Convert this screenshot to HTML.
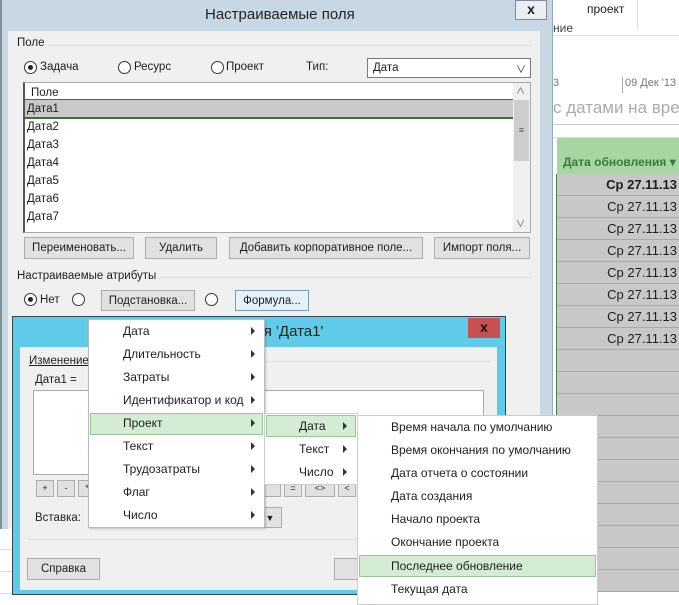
<!DOCTYPE html>
<html><head><meta charset="utf-8"><style>
*{box-sizing:border-box;margin:0;padding:0}
body{width:679px;height:597px;overflow:hidden;position:relative;background:#fff;font-family:"Liberation Sans","Noto Sans CJK SC",sans-serif;font-size:11.5px;color:#1e1e1e}
.a{position:absolute;white-space:nowrap}
.btn{position:absolute;background:#e1e1e1;border:1px solid #adadad;text-align:center;display:flex;align-items:center;justify-content:center}
.rad{position:absolute;width:13px;height:13px;border:1px solid #333;border-radius:50%;background:#fff}
.rad.on::after{content:"";position:absolute;left:3px;top:3px;width:5px;height:5px;border-radius:50%;background:#222}
.row{position:absolute;left:557px;width:122px;height:22px;background:#c8c8c8;border-bottom:1px solid #a8a8a8;text-align:right;padding-right:2px;line-height:21px;font-size:13px}
.mi{position:absolute;height:22px;line-height:22px;font-size:12px}
.arr{position:absolute;width:0;height:0;border-top:4px solid transparent;border-bottom:4px solid transparent;border-left:4px solid #333}
.sb{position:absolute;width:18px;height:17px;background:#e1e1e1;border:1px solid #adadad;text-align:center;font-size:9px;line-height:15px}
</style></head><body>
<div class="a" style="left:553px;top:0;width:126px;height:36px;border-bottom:1px solid #ddd"></div>
<div class="a" style="left:587px;top:2px;font-size:12px">проект</div>
<div class="a" style="left:637px;top:0;width:1px;height:30px;background:#ddd"></div>
<div class="a" style="left:553px;top:21px;font-size:12px;color:#444">ние</div>
<div class="a" style="left:622px;top:77px;font-size:11px;color:#777;border-left:1px solid #aaa;padding-left:2px;height:16px">09 Дек '13</div>
<div class="a" style="left:553px;top:77px;font-size:11px;color:#777">3</div>
<div class="a" style="left:553px;top:98px;font-size:17px;color:#aaa">с датами на врем</div>
<div class="a" style="left:553px;top:124px;width:126px;height:1px;background:#ccc"></div>
<div class="a" style="left:553px;top:137px;width:126px;height:1px;background:#ddd"></div>
<div class="a" style="left:557px;top:138px;width:122px;height:36px;background:#a6d6a2"></div>
<div class="a" style="left:563px;top:155px;font-size:12px;font-weight:bold;color:#3d7a3d">Дата обновления ▾</div>
<div class="a" style="left:556px;top:174px;width:2px;height:423px;background:#4a7a4a"></div>
<div class="row" style="top:174px;font-weight:bold">Ср 27.11.13</div>
<div class="row" style="top:196px">Ср 27.11.13</div>
<div class="row" style="top:218px">Ср 27.11.13</div>
<div class="row" style="top:240px">Ср 27.11.13</div>
<div class="row" style="top:262px">Ср 27.11.13</div>
<div class="row" style="top:284px">Ср 27.11.13</div>
<div class="row" style="top:306px">Ср 27.11.13</div>
<div class="row" style="top:328px">Ср 27.11.13</div>
<div class="row" style="top:350px"></div>
<div class="row" style="top:372px"></div>
<div class="row" style="top:394px"></div>
<div class="row" style="top:416px"></div>
<div class="row" style="top:438px"></div>
<div class="row" style="top:460px"></div>
<div class="row" style="top:482px"></div>
<div class="row" style="top:504px"></div>
<div class="row" style="top:526px"></div>
<div class="row" style="top:548px"></div>
<div class="row" style="top:570px"></div>
<div class="a" style="left:0;top:528px;width:12px;height:69px;background:repeating-linear-gradient(#fff 0 21px,#ddd 21px 22px)"></div>
<div class="a" style="left:0;top:0;width:553px;height:529px;background:#c7d8e4;border-right:1px solid #9ab"></div>
<div class="a" style="left:0;top:0;width:2px;height:529px;background:#7d8e9a"></div>
<div class="a" style="left:205px;top:6px;font-size:15px;color:#222">Настраиваемые поля</div>
<div class="a" style="left:515px;top:0;width:32px;height:20px;background:#e8eef2;border:1px solid #889;text-align:center;font-weight:bold;font-size:14px;line-height:17px">x</div>
<div class="a" style="left:8px;top:31px;width:532px;height:498px;background:#f0f0f0"></div>
<div class="a" style="left:17px;top:37px">Поле</div>
<div class="a" style="left:48px;top:45px;width:484px;height:1px;background:#ddd"></div>
<div class="rad on" style="left:24px;top:61px"></div><div class="a" style="left:40px;top:61px">Задача</div>
<div class="rad" style="left:118px;top:61px"></div><div class="a" style="left:134px;top:61px">Ресурс</div>
<div class="rad" style="left:211px;top:61px"></div><div class="a" style="left:226px;top:61px">Проект</div>
<div class="a" style="left:306px;top:61px">Тип:</div>
<div class="a" style="left:367px;top:58px;width:164px;height:20px;background:#fff;border:1px solid #7a7a7a;padding:3px 5px">Дата<span style="position:absolute;right:4px;top:2px;font-size:10px">&#8744;</span></div>
<div class="a" style="left:23px;top:82px;width:508px;height:151px;background:#fff;border:1px solid #aaa;border-left:2px solid #555"></div>
<div class="a" style="left:31px;top:87px">Поле</div>
<div class="a" style="left:25px;top:99px;width:488px;height:20px;background:#c9c9c9;border-top:1px solid #3f6e3f;border-bottom:2px solid #3f6e3f"></div>
<div class="a" style="left:27px;top:103px">Дата1</div>
<div class="a" style="left:27px;top:121px">Дата2</div>
<div class="a" style="left:27px;top:139px">Дата3</div>
<div class="a" style="left:27px;top:157px">Дата4</div>
<div class="a" style="left:27px;top:175px">Дата5</div>
<div class="a" style="left:27px;top:193px">Дата6</div>
<div class="a" style="left:27px;top:211px">Дата7</div>
<div class="a" style="left:513px;top:83px;width:17px;height:149px;background:#f0f0f0"></div>
<div class="a" style="left:514px;top:100px;width:15px;height:61px;background:#cdcdcd;text-align:center;line-height:60px;font-size:9px;color:#555">≡</div>
<div class="a" style="left:516px;top:84px;font-size:9px;color:#555">&#8743;</div>
<div class="a" style="left:516px;top:217px;font-size:9px;color:#555">&#8744;</div>
<div class="btn" style="left:24px;top:237px;width:110px;height:22px">Переименовать...</div>
<div class="btn" style="left:145px;top:237px;width:72px;height:22px">Удалить</div>
<div class="btn" style="left:229px;top:237px;width:194px;height:22px">Добавить корпоративное поле...</div>
<div class="btn" style="left:434px;top:237px;width:96px;height:22px">Импорт поля...</div>
<div class="a" style="left:17px;top:270px">Настраиваемые атрибуты</div>
<div class="a" style="left:160px;top:277px;width:372px;height:1px;background:#ddd"></div>
<div class="rad on" style="left:24px;top:293px"></div><div class="a" style="left:40px;top:294px">Нет</div>
<div class="rad" style="left:72px;top:293px"></div>
<div class="btn" style="left:101px;top:290px;width:94px;height:21px">Подстановка...</div>
<div class="rad" style="left:205px;top:293px"></div>
<div class="btn" style="left:235px;top:290px;width:74px;height:21px;background:#e5f1fb;border-color:#7a9cc0">Формула...</div>
<div class="a" style="left:12px;top:316px;width:494px;height:279px;background:#5fcbe8;border:1px solid #345"></div>
<div class="a" style="left:255px;top:323px;font-size:15px;color:#222">ля 'Дата1'</div>
<div class="a" style="left:468px;top:318px;width:32px;height:20px;background:#c75050;text-align:center;font-weight:bold;font-size:14px;line-height:18px;color:#111">x</div>
<div class="a" style="left:20px;top:347px;width:477px;height:243px;background:#f0f0f0"></div>
<div class="a" style="left:29px;top:355px;text-decoration:underline">И<span style="text-decoration:none">зменение</span></div>
<div class="a" style="left:90px;top:361px;width:400px;height:1px;background:#ddd"></div>
<div class="a" style="left:35px;top:374px">Дата1 =</div>
<div class="a" style="left:33px;top:390px;width:451px;height:85px;background:#fff;border:1px solid #aaa"></div>
<div class="sb" style="left:36px;top:480px">+</div>
<div class="sb" style="left:57px;top:480px">-</div>
<div class="sb" style="left:78px;top:480px">*</div>
<div class="sb" style="left:263px;top:480px"></div>
<div class="sb" style="left:284px;top:480px">=</div>
<div class="sb" style="left:305px;top:480px;width:30px">&lt;&gt;</div>
<div class="sb" style="left:338px;top:480px">&lt;</div>
<div class="a" style="left:35px;top:512px">Вставка:</div>
<div class="btn" style="left:258px;top:507px;width:24px;height:21px;font-size:9px">&#9660;</div>
<div class="a" style="left:28px;top:539px;width:460px;height:1px;background:#ddd"></div>
<div class="btn" style="left:27px;top:558px;width:73px;height:22px">Справка</div>
<div class="btn" style="left:334px;top:558px;width:30px;height:22px"></div>
<div class="a" style="left:88px;top:319px;width:177px;height:209px;background:#fff;border:1px solid #bbb;box-shadow:1px 1px 2px rgba(0,0,0,.2)"></div>
<div class="a" style="left:90px;top:413px;width:173px;height:22px;background:#d4ecd3;border:1px solid #94c894"></div>
<div class="mi" style="left:123px;top:320px">Дата</div>
<div class="mi" style="left:123px;top:343px">Длительность</div>
<div class="mi" style="left:123px;top:366px">Затраты</div>
<div class="mi" style="left:123px;top:389px">Идентификатор и код</div>
<div class="mi" style="left:123px;top:412px">Проект</div>
<div class="mi" style="left:123px;top:435px">Текст</div>
<div class="mi" style="left:123px;top:458px">Трудозатраты</div>
<div class="mi" style="left:123px;top:481px">Флаг</div>
<div class="mi" style="left:123px;top:504px">Число</div>
<div class="arr" style="left:251px;top:327px"></div><div class="arr" style="left:251px;top:350px"></div><div class="arr" style="left:251px;top:373px"></div><div class="arr" style="left:251px;top:396px"></div><div class="arr" style="left:251px;top:419px"></div><div class="arr" style="left:251px;top:442px"></div><div class="arr" style="left:251px;top:465px"></div><div class="arr" style="left:251px;top:488px"></div><div class="arr" style="left:251px;top:511px"></div>
<div class="a" style="left:264px;top:413px;width:94px;height:72px;background:#fff;border:1px solid #ccc"></div>
<div class="a" style="left:266px;top:415px;width:90px;height:22px;background:#d4ecd3;border:1px solid #94c894"></div>
<div class="mi" style="left:299px;top:415px">Дата</div>
<div class="mi" style="left:299px;top:438px">Текст</div>
<div class="mi" style="left:299px;top:461px">Число</div>
<div class="arr" style="left:343px;top:422px"></div><div class="arr" style="left:343px;top:445px"></div><div class="arr" style="left:343px;top:468px"></div>
<div class="a" style="left:357px;top:415px;width:241px;height:190px;background:#fff;border:1px solid #ccc"></div>
<div class="a" style="left:359px;top:555px;width:237px;height:22px;background:#d4ecd3;border:1px solid #94c894"></div>
<div class="mi" style="left:391px;top:416px">Время начала по умолчанию</div>
<div class="mi" style="left:391px;top:439px">Время окончания по умолчанию</div>
<div class="mi" style="left:391px;top:462px">Дата отчета о состоянии</div>
<div class="mi" style="left:391px;top:485px">Дата создания</div>
<div class="mi" style="left:391px;top:508px">Начало проекта</div>
<div class="mi" style="left:391px;top:531px">Окончание проекта</div>
<div class="mi" style="left:391px;top:555px">Последнее обновление</div>
<div class="mi" style="left:391px;top:578px">Текущая дата</div>
</body></html>
